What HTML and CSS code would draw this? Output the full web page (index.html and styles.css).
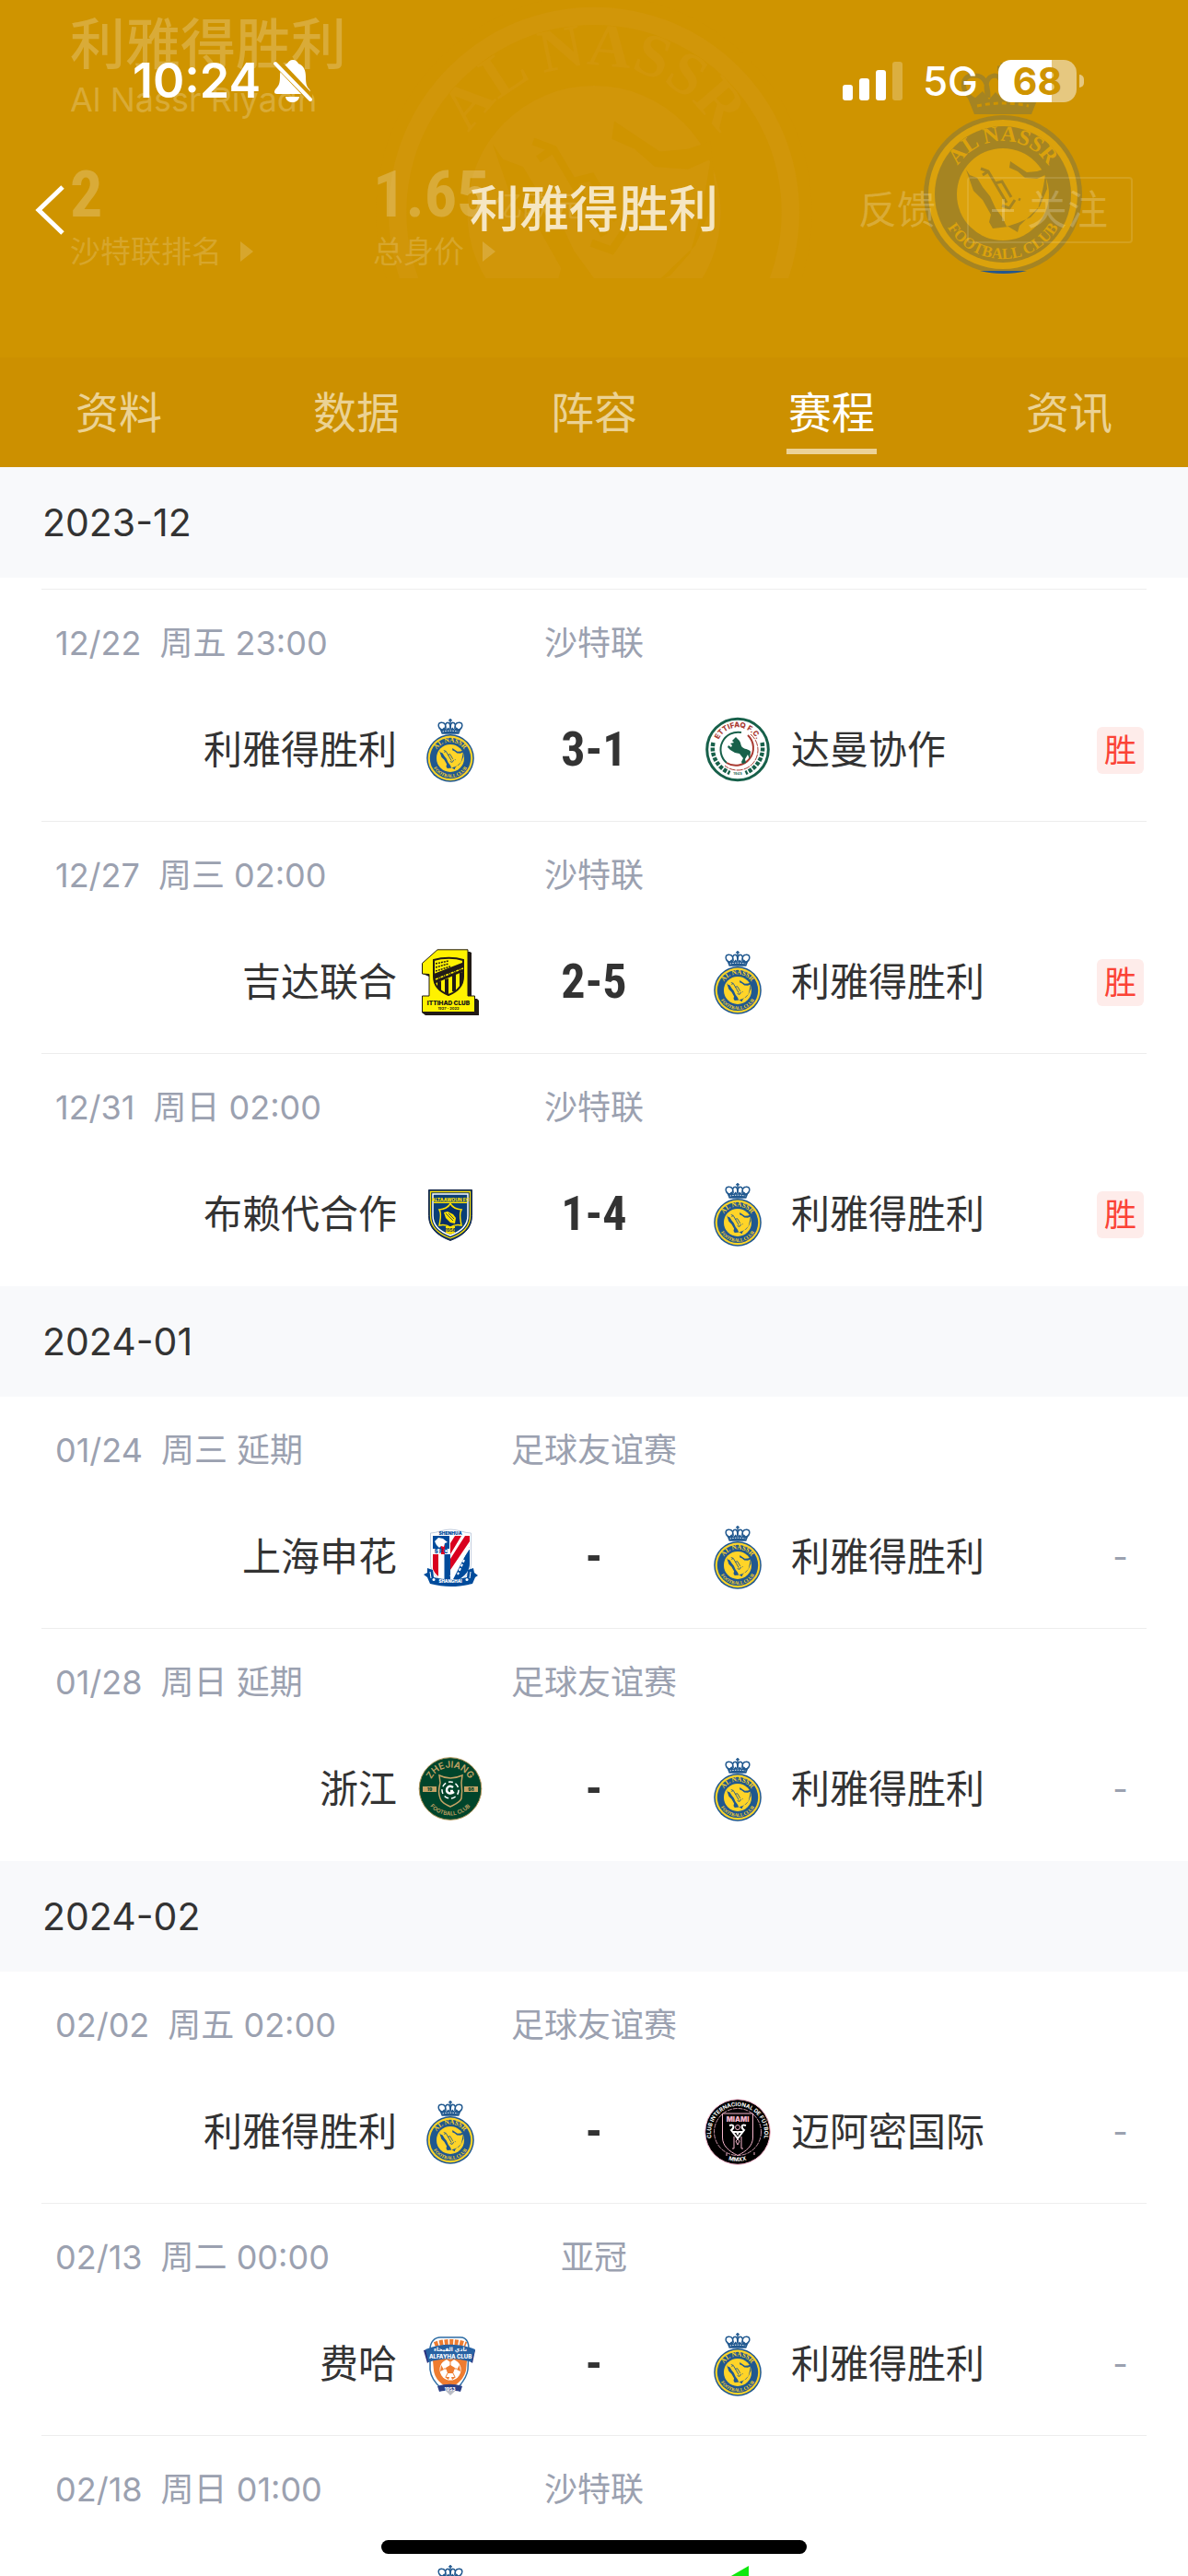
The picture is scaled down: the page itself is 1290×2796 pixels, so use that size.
FILE: index.html
```html
<!DOCTYPE html>
<html lang="zh-CN">
<head>
<meta charset="utf-8">
<meta name="viewport" content="width=device-width, initial-scale=1">
<title>利雅得胜利 - 赛程</title>
<link rel="stylesheet" href="styles.css">
</head>
<body>
<svg class="shapes" aria-hidden="true">
  <defs>
    <path id="nassr-top" d="M32 143a58 58 0 0 1 116 0"/>
    <path id="nassr-bottom" d="M20 143a70 70 0 0 0 140 0"/>
    <path id="ettifaq-top" d="M13.500 34a22.500 22.500 0 0 1 45 0"/>
    <path id="zj-top" d="M13 35.500a23 23 0 0 1 46 0"/>
    <path id="zj-bottom" d="M7 35.500a29 29 0 0 0 58 0"/>
    <path id="miami-ring" d="M15 57a29 29 0 1 1 42 0"/>
    <path id="miami-bottom" d="M4 36a32 32 0 0 0 64 0"/>
    <clipPath id="shenhua-clip"><path d="M16 13h41v30c0 10-8 17-20.500 21C24 60 16 53 16 43z"/></clipPath>
    <clipPath id="ittihad-clip"><path d="M18 12c10-3 23-3 32 0v18c0 10-6 16-16 20-10-4-16-10-16-20z"/></clipPath>
  </defs>
</svg>
<svg class="sprite" aria-hidden="true">
  <symbol id="nassr" viewBox="0 0 180 230">
    <g class="crest-line" fill="none" stroke-width="5">
      <path d="M60 41C43 33 43 12 60 14c9 0 14 8 14 24M120 41c17-8 17-29 0-27-9 0-14 8-14 24M74 38c-4-14-2-23 7-24 6 0 9 8 9 24M106 38c4-14 2-23-7-24-6 0-9 8-9 24"/>
      <path d="M90 0v38M84 6h12"/>
    </g>
    <path class="crest-dark" d="M49 31l10 8 9-8 7 9 7-8 8 8 8-8 7 8 7-9 9 8 10-8-10 25H59z"/>
    <path class="crest-gap" d="M62 47c18-4 38-4 56 0" fill="none" stroke-width="3" stroke-dasharray="5 4"/>
    <circle class="crest-dark" cx="90" cy="143" r="86"/>
    <circle class="crest-light" cx="90" cy="143" r="81"/>
    <circle class="crest-dark" cx="90" cy="143" r="74"/>
    <circle class="crest-light" cx="90" cy="143" r="50"/>
    <path class="crest-dark" d="M50 116l4 6 8 3 6 10 8 10 6 13 8 11 4 9 12-4 14-6 8-9 3-11 3-14 2-12-9 4-13-1-8-7-9-4 1-7 9 6 9 6 11-1 9-3 2 22-8 19-22 21-2 7-10-6-17 2-4-7 2-8-9-16-10-10z"/>
    <path class="crest-line" d="M66 115l8 3 20 34M74 118l-6 4M81 131l8-2 10 17M89 155l8 3 6-9M107 148l2 1" fill="none" stroke-width="3"/>
    <text class="crest-word" font-size="24"><textPath href="#nassr-top" startOffset="50%" text-anchor="middle">AL NASSR</textPath></text>
    <text class="crest-word" font-size="17"><textPath href="#nassr-bottom" startOffset="50%" text-anchor="middle">FOOTBALL CLUB</textPath></text>
  </symbol>

  <symbol id="ettifaq" viewBox="0 0 72 72">
    <circle cx="36" cy="35.500" r="33.300" fill="#fff" stroke="#17604a" stroke-width="3"/>
    <text fill="#a93a32" font-family="Inter" font-weight="800" font-size="8"><textPath href="#ettifaq-top" startOffset="50%" text-anchor="middle">ETTIFAQ F.C.</textPath></text>
    <g fill="none" stroke="#17604a" stroke-dasharray="4 1.500">
      <path stroke-width="4.500" d="M9.500 28c-3 13 4 27 18 33M62.500 28c3 13-4 27-18 33"/>
    </g>
    <path d="M24 50a19 19 0 0 1 16-33" fill="none" stroke="#17604a" stroke-width="2"/>
    <path d="M47 20a19 19 0 0 1-23 30" fill="none" stroke="#a93a32" stroke-width="2"/>
    <path d="M50 19a22 22 0 0 1-28 34" fill="none" stroke="#a93a32" stroke-width="1" stroke-dasharray="7 1"/>
    <path fill="#17604a" d="M30 26l4-4 3 3c3 3 2 6 4 8 4 3 8 2 9 5l-1 8-2-5-3 5 1 4-4 1-1-2 2-4-4-5-5-1-5-3-3-3 1-2 3 2 1-2-2-2 4-1z"/>
    <text x="36" y="63" text-anchor="middle" fill="#17604a" font-family="Inter" font-weight="600" font-size="4">1945</text>
  </symbol>

  <symbol id="ittihad" viewBox="0 0 72 72">
    <path fill="#211b16" d="M26 3h31l2 1v50h6l2 2v16H9l-4-3 1-17 7 1V30l-7-3z"/>
    <path fill="#fff200" stroke="#211b16" stroke-width="1" d="M22 .800h33v50.200h7.500v17.500H5.500V51H13V27.500l-7.500-.500V15.500z"/>
    <path fill="#fff200" stroke="#211b16" stroke-width="2" d="M18 12c10-3 23-3 32 0v18c0 10-6 16-16 20-10-4-16-10-16-20z"/>
    <g clip-path="url(#ittihad-clip)">
      <path fill="#211b16" d="M18 27l33-13v10L18 38zM22 36l4-1v11h-4zM30 33l4-1v18h-4zM38 29l4-1v18h-4zM46 26l4-1v15h-4z"/>
      <path fill="none" stroke="#fff200" stroke-width="1.500" stroke-dasharray="3 1 1 1" d="M20 33l30-12"/>
      <path fill="none" stroke="#211b16" stroke-width="1.500" stroke-dasharray="2 1" d="M20 16l14-3M20 20l14-4M20 24l16-5"/>
    </g>
    <text x="34" y="60.500" text-anchor="middle" fill="#211b16" font-family="Inter" font-weight="900" font-size="6.500">ITTIHAD CLUB</text>
    <text x="34" y="66" text-anchor="middle" fill="#211b16" font-family="Inter" font-weight="700" font-size="4">1927 - 2022</text>
  </symbol>

  <symbol id="taawoun" viewBox="0 0 72 72">
    <path fill="#072f66" stroke="#1a2b4a" stroke-width="1" d="M12.500 9.500h47v28c0 14-10 22-23.500 27-13.500-5-23.500-13-23.500-27z"/>
    <path fill="none" stroke="#ffe100" stroke-width="1.300" d="M14.500 11.500h43v26c0 13-9 20-21.500 24.500C23.500 57.500 14.500 50.500 14.500 37.500z"/>
    <path fill="#0a3f77" stroke="#fff" stroke-width="1.500" d="M17 14h38v23.500c0 11-8 17.500-19 21.500-11-4-19-10.500-19-21.500z"/>
    <path fill="#ffe100" d="M18 22.500h36v1.500H18zM31 49h10v7l-5 2-5-2z"/>
    <path fill="#072f66" stroke="#ffe100" stroke-width="1.500" d="M36 24.500c3 5 7 6 12 6.500-3 5-1 11 0 17-5-1-9 0-12 2-3-2-7-3-12-2 1-6 3-12 0-17 5-.500 9-1.500 12-6.500z"/>
    <path fill="#ffe100" d="M29 34l4-1 6 3 3 4-1 6-5-1-5-5z"/>
    <path fill="none" stroke="#072f66" stroke-width=".800" d="M31 35l8 8M34 35l6 6"/>
    <text x="36" y="21.500" text-anchor="middle" fill="#ffe100" font-family="Inter" font-weight="800" font-size="5">ALTAAWOUN FC</text>
    <text x="36" y="54.500" text-anchor="middle" fill="#072f66" font-family="Inter" font-weight="800" font-size="4.500">1956</text>
  </symbol>

  <symbol id="shenhua" viewBox="0 0 72 72">
    <path fill="#fff" stroke="#c3cede" stroke-width="1" d="M14.500 10c7 0 13-4 21.500-4s15 4 22.500 4v33c0 11-8 18-22 23-14-5-22-12-22-23z"/>
    <text x="36" y="11.500" text-anchor="middle" fill="#004b9b" font-family="Inter" font-weight="900" font-size="5">SHENHUA</text>
    <g clip-path="url(#shenhua-clip)">
      <path fill="#004b9b" d="M17 13h18v19H17zM29.500 33H36v31h-6.500zM57 25v32L36 66z"/>
      <path fill="#fff" d="M17 27h19v6H17z"/>
      <path fill="#d9001f" d="M26 23h4v10h-4zM17 33h6v24h-6zM36 33l12-20h-7L36 21zM36 50l21-31v-6h-5L36 38z"/>
      <path fill="none" stroke="#fff" stroke-width="1.500" d="M36 57l21-31"/>
      <path fill="#fff" d="M19 19l4-4 5 1 5 4-3 1-1 4-3-1-2 2-3-3z"/>
      <text x="26" y="31.500" text-anchor="middle" fill="#004b9b" font-family="Inter" font-weight="900" font-size="6">S F C</text>
      <path stroke="#fff" stroke-width="2" stroke-dasharray="3 2" d="M51 39L44 55"/>
    </g>
    <path fill="#004b9b" d="M11 48l6 2 1 8c12 3 24 3 36 0l1-8 6-2 1 5 4 3-3 2-3 7c-17 4-30 4-46 0l-3-7-4-3 4-2z"/>
    <path fill="none" stroke="#fff" stroke-width="1" d="M14 52l1 7M58 52l-1 7"/>
    <circle cx="18" cy="60.500" r="1.500" fill="#fff"/><circle cx="54" cy="60.500" r="1.500" fill="#fff"/>
    <text x="36" y="64" text-anchor="middle" fill="#fff" font-family="Inter" font-weight="900" font-size="4.500">SHANGHAI</text>
  </symbol>

  <symbol id="zhejiang" viewBox="0 0 72 72">
    <circle cx="36" cy="35.500" r="33.800" fill="#00452b" stroke="#b3955a" stroke-width="1"/>
    <text fill="#c3a265" font-family="Inter" font-weight="600" font-size="10"><textPath href="#zj-top" startOffset="50%" text-anchor="middle">ZHEJIANG</textPath></text>
    <text fill="#c3a265" font-family="Inter" font-weight="600" font-size="6"><textPath href="#zj-bottom" startOffset="50%" text-anchor="middle">FOOTBALL CLUB</textPath></text>
    <path fill="#c3a265" d="M6 33h15v6H6zM51 33h15v6H51z"/>
    <text x="13.500" y="37.800" text-anchor="middle" fill="#00452b" font-family="Inter" font-weight="800" font-size="5">19</text>
    <text x="58.500" y="37.800" text-anchor="middle" fill="#00452b" font-family="Inter" font-weight="800" font-size="5">98</text>
    <path fill="none" stroke="#c3a265" stroke-width="1.500" d="M24 21c8 4 16 4 25 0l-1 8c1 8 1 11 0 17-1 4-6 6-12 9-6-3-10-5-11-9-2-6-2-9 0-17z"/>
    <circle cx="36" cy="37" r="9" fill="none" stroke="#fff" stroke-width="1.500" stroke-dasharray="5 3"/>
    <path fill="none" stroke="#fff" stroke-width="2.500" d="M39 34c-4-3-7 0-7 3s4 5 8 2M36 38h3"/>
  </symbol>

  <symbol id="miami" viewBox="0 0 72 72">
    <circle cx="36" cy="36" r="35.300" fill="#000" stroke="#f5b5cb" stroke-width="1"/>
    <text fill="#fff" font-family="Inter" font-weight="700" font-size="6"><textPath href="#miami-ring" startOffset="50%" text-anchor="middle">CLUB INTERNACIONAL DE FÚTBOL</textPath></text>
    <text fill="#fff" font-family="Inter" font-weight="700" font-size="6"><textPath href="#miami-bottom" startOffset="50%" text-anchor="middle">MMXX</textPath></text>
    <circle cx="36" cy="36" r="25.500" fill="none" stroke="#f5b5cb" stroke-width=".800" stroke-dasharray="5 1"/>
    <path fill="#000" stroke="#f5b5cb" stroke-width="1" d="M19.500 16h33v26c0 9-7 15-16.500 19.500C26.500 57 19.500 51 19.500 42z"/>
    <text x="36" y="25" text-anchor="middle" fill="#f5b5cb" font-family="Inter" font-weight="900" font-size="7.500">MIAMI</text>
    <path fill="none" stroke="#fff" stroke-width="2" d="M27 29c6-2 5 3 2 5l7 9 7-9c-3-2-4-7 2-5M30 36h5l1 2 1-2h5"/>
    <circle cx="36" cy="31" r="2.500" fill="none" stroke="#f5b5cb"/>
    <path fill="none" stroke="#f5b5cb" stroke-width="1" d="M32 41v13h-2M40 41v13h2M34 46l2-2 2 2-2 4zM24 59v3M54 58v3"/>
  </symbol>

  <symbol id="fayha" viewBox="0 0 72 72">
    <path fill="#b9bcc4" d="M24 58l12 12 13-12z"/>
    <path fill="#fff" stroke="#2f6ea5" stroke-width="1.500" d="M14 20c0-8 5-13 11-13h22c6 0 9 5 9 13l-1 22c-1 9-7 15-11 20H26c-6-5-11-11-12-20z"/>
    <path fill="none" stroke="#ee7c30" stroke-width="6" stroke-dasharray="4 1.500" d="M19 15c10-4 24-4 34 0"/>
    <path fill="#ee7c30" d="M17 32c12-5 25-5 37 0l-1 11c-2 7-6 12-12 16H29c-6-4-10-9-11-16z"/>
    <circle cx="36" cy="42" r="11.500" fill="#fff"/>
    <path fill="#ee7c30" d="M36 37l5 3-2 6h-6l-2-6zM32 31h8l-4 3zM46 37l1 7-4-2zM26 37l3 5-4 2zM30 50l5 0-1 3zM42 50l-5 0 1 3z"/>
    <path fill="none" stroke="#ee7c30" stroke-width="1" d="M36 34v4M43 41l-3 0M29 41l3 0M33 46l-2 4M39 46l2 4"/>
    <path fill="#2b2f7c" d="M7 21l9-2v11l-5 5zM63 21l-9-2v11l6 5z"/>
    <path fill="#2862a3" d="M9 20c17-7 36-7 54 0l-4 14c-15-5-31-5-47 0z"/>
    <text x="36" y="22" text-anchor="middle" fill="#fff" font-family="DejaVu Sans" font-weight="700" font-size="6">نادي الفيحاء</text>
    <text x="36" y="29.500" text-anchor="middle" fill="#fff" font-family="Inter" font-weight="800" font-size="6">ALFAYHA CLUB</text>
    <path fill="#2b3f86" d="M22 60c9-3 18-3 27 0l-2 6c-8-2-15-2-23 0z"/>
    <text x="35.500" y="64.500" text-anchor="middle" fill="#fff" font-family="Inter" font-weight="800" font-size="5">1953</text>
  </symbol>

  <symbol id="fateh" viewBox="0 0 72 72">
    <path fill="#10e80e" d="M48 3v66L8 50V26z"/>
  </symbol>
</svg>

<header class="header">
  <div class="hero">
    <svg class="watermark" aria-hidden="true" viewBox="0 0 180 230"><use href="#nassr"/></svg>
    <section class="profile" aria-label="球队信息">
      <h2 class="profile-name">利雅得胜利</h2>
      <p class="profile-latin">Al Nassr Riyadh</p>
      <div class="stats">
        <div class="stat">
          <p class="stat-value">2</p>
          <p class="stat-label">沙特联排名<i class="arrow"></i></p>
        </div>
        <div class="stat">
          <p class="stat-value">1.65<span class="stat-unit">亿欧元</span></p>
          <p class="stat-label">总身价<i class="arrow"></i></p>
        </div>
      </div>
    </section>
    <svg class="hero-crest" aria-hidden="true" viewBox="0 0 180 230">
      <use href="#nassr"/>
      <path fill="#22568f" d="M65 226h51c-16 4-35 4-51 0z"/>
    </svg>
    <div class="bars">
      <div class="status">
        <span class="clock">10:24</span>
        <svg class="bell" viewBox="0 0 42 46" aria-hidden="true">
          <path fill="#fff" d="M21 0c3 0 5 2 6 4 6 2 8 8 8 14 0 8 1 11 4 14 2 3 1 5-2 5H4c-3 0-4-2-2-5 4-4 5-7 5-14C7 11 9 6 15 4c1-2 3-4 6-4zM13 40h15c-1 8-14 8-15 0z"/>
          <path stroke="#cf9400" stroke-width="9" d="M2 1l40 42"/>
          <path stroke="#fff" stroke-width="4" stroke-linecap="round" d="M2 4l38 39"/>
        </svg>
        <span class="status-right">
          <svg class="signal" viewBox="0 0 65 42" aria-hidden="true">
            <g fill="#fff"><rect y="25" width="11" height="17" rx="3"/><rect x="18" y="18" width="11" height="24" rx="3"/><rect x="36" y="9" width="11" height="33" rx="3"/><rect x="54" width="11" height="42" rx="3" opacity=".25"/></g>
          </svg>
          <span class="network">5G</span>
          <span class="battery">68</span>
        </span>
      </div>
      <div class="navbar">
        <button class="back" type="button" aria-label="返回">
          <svg viewBox="0 0 32 54" aria-hidden="true"><path d="M30 2L4 27l26 25" fill="none" stroke="#fff" stroke-width="5"/></svg>
        </button>
        <h1 class="title">利雅得胜利</h1>
        <div class="actions">
          <button class="feedback" type="button">反馈</button>
          <button class="follow" type="button"><i class="plus"></i>关注</button>
        </div>
      </div>
    </div>
  </div>
  <nav class="tabs">
    <a class="tab" href="#info">资料</a>
    <a class="tab" href="#data">数据</a>
    <a class="tab" href="#squad">阵容</a>
    <a class="tab tab-active" href="#schedule" aria-current="page">赛程</a>
    <a class="tab" href="#news">资讯</a>
  </nav>
</header>

<main class="schedule" id="schedule">
  <section>
    <h2 class="month">2023-12</h2>
    <div class="lead"></div>
    <article class="match">
      <div class="meta"><time class="when"><span>12/22</span><span>周五 23:00</span></time><span class="league">沙特联</span></div>
      <div class="teams">
        <span class="home">利雅得胜利</span><svg class="logo"><use href="#nassr"/></svg>
        <strong class="score">3-1</strong>
        <svg class="logo"><use href="#ettifaq"/></svg><span class="away">达曼协作</span><span class="win">胜</span>
      </div>
    </article>
    <article class="match">
      <div class="meta"><time class="when"><span>12/27</span><span>周三 02:00</span></time><span class="league">沙特联</span></div>
      <div class="teams">
        <span class="home">吉达联合</span><svg class="logo"><use href="#ittihad"/></svg>
        <strong class="score">2-5</strong>
        <svg class="logo"><use href="#nassr"/></svg><span class="away">利雅得胜利</span><span class="win">胜</span>
      </div>
    </article>
    <article class="match">
      <div class="meta"><time class="when"><span>12/31</span><span>周日 02:00</span></time><span class="league">沙特联</span></div>
      <div class="teams">
        <span class="home">布赖代合作</span><svg class="logo"><use href="#taawoun"/></svg>
        <strong class="score">1-4</strong>
        <svg class="logo"><use href="#nassr"/></svg><span class="away">利雅得胜利</span><span class="win">胜</span>
      </div>
    </article>
  </section>

  <section>
    <h2 class="month">2024-01</h2>
    <article class="match">
      <div class="meta"><time class="when"><span>01/24</span><span>周三 延期</span></time><span class="league">足球友谊赛</span></div>
      <div class="teams">
        <span class="home">上海申花</span><svg class="logo"><use href="#shenhua"/></svg>
        <strong class="score">-</strong>
        <svg class="logo"><use href="#nassr"/></svg><span class="away">利雅得胜利</span><span class="none">-</span>
      </div>
    </article>
    <article class="match">
      <div class="meta"><time class="when"><span>01/28</span><span>周日 延期</span></time><span class="league">足球友谊赛</span></div>
      <div class="teams">
        <span class="home">浙江</span><svg class="logo"><use href="#zhejiang"/></svg>
        <strong class="score">-</strong>
        <svg class="logo"><use href="#nassr"/></svg><span class="away">利雅得胜利</span><span class="none">-</span>
      </div>
    </article>
  </section>

  <section>
    <h2 class="month">2024-02</h2>
    <article class="match">
      <div class="meta"><time class="when"><span>02/02</span><span>周五 02:00</span></time><span class="league">足球友谊赛</span></div>
      <div class="teams">
        <span class="home">利雅得胜利</span><svg class="logo"><use href="#nassr"/></svg>
        <strong class="score">-</strong>
        <svg class="logo"><use href="#miami"/></svg><span class="away">迈阿密国际</span><span class="none">-</span>
      </div>
    </article>
    <article class="match">
      <div class="meta"><time class="when"><span>02/13</span><span>周二 00:00</span></time><span class="league">亚冠</span></div>
      <div class="teams">
        <span class="home">费哈</span><svg class="logo"><use href="#fayha"/></svg>
        <strong class="score">-</strong>
        <svg class="logo"><use href="#nassr"/></svg><span class="away">利雅得胜利</span><span class="none">-</span>
      </div>
    </article>
    <article class="match">
      <div class="meta"><time class="when"><span>02/18</span><span>周日 01:00</span></time><span class="league">沙特联</span></div>
      <div class="teams">
        <span class="home"></span><svg class="logo"><use href="#nassr"/></svg>
        <strong class="score"></strong>
        <svg class="logo"><use href="#fateh"/></svg><span class="away"></span>
      </div>
    </article>
  </section>
</main>
<div class="home-indicator"></div>
</body>
</html>
```
FILE: styles.css
```css
:root {
  --gold: #cf9400;
  --ink: #333;
  --muted: #9ba1b0;
  --ghost: rgba(255, 255, 255, .22);
  --narrow: "Liberation Sans Narrow", "Roboto Condensed", Roboto, sans-serif;
  --crest-dark: #20588f;
  --crest-light: #ffd428;
  --crest-gap: #fff;
}

* { box-sizing: border-box; margin: 0; }

body {
  display: flex;
  flex-direction: column;
  height: 100vh;
  overflow: hidden;
  background: #fff;
  color: var(--ink);
  font-family: Inter, "Noto Sans CJK SC", sans-serif;
}

button {
  padding: 0;
  border: 0;
  background: none;
  color: inherit;
  font: inherit;
}

.shapes { position: absolute; width: 0; height: 0; }
.sprite { display: none; }

.crest-dark { fill: var(--crest-dark); }
.crest-light { fill: var(--crest-light); }
.crest-line { stroke: var(--crest-dark); }
.crest-gap { stroke: var(--crest-gap); }
.crest-word { fill: var(--crest-light); font-family: "Liberation Serif", serif; font-weight: 700; }

/* Header */
.header { flex: none; background: var(--gold); color: #fff; }

.hero { position: relative; display: grid; height: 388px; overflow: hidden; }
.profile, .bars { position: relative; grid-area: 1 / 1; }

.watermark {
  --crest-dark: #cf9400;
  --crest-light: #d19609;
  --crest-gap: #cf9400;
  position: absolute;
  left: 50%;
  top: -163px;
  width: 496px;
  height: 633px;
  margin-left: -248px;
  clip-path: inset(0 0 168px);
}

.hero-crest {
  --crest-dark: #a58422;
  --crest-light: #dba20c;
  --crest-gap: #cf9400;
  position: absolute;
  right: 111px;
  top: 68px;
  width: 180px;
  height: 230px;
}

.profile { padding: 18px 0 0 76px; color: var(--ghost); }
.profile-name { font-size: 60px; line-height: 60px; font-weight: 500; }
.profile-latin { margin-top: 8px; font-size: 36px; line-height: 44px; }
.stats { display: grid; grid-template-columns: 329px 329px; margin-top: 51px; }
.stat-value { font: 700 70px/60px var(--narrow); }
.stat-unit { margin-left: 4px; font: 400 32px/32px "Noto Sans CJK SC", sans-serif; opacity: .6; }
.stat-label { display: flex; align-items: center; margin-top: 14px; font-size: 33px; line-height: 36px; opacity: .8; }
.arrow { margin-left: 20px; border: solid transparent; border-width: 11px 0 11px 14px; border-left-color: currentColor; }

.status { display: flex; align-items: center; height: 176px; padding: 0 113px 0 144px; }
.clock { font-size: 52px; line-height: 60px; font-weight: 600; }
.bell { width: 42px; height: 46px; margin-left: 14px; }
.status-right { display: flex; align-items: center; gap: 22px; margin-left: auto; }
.signal { width: 65px; height: 42px; }
.network { font-size: 44px; line-height: 48px; font-weight: 500; }
.battery {
  position: relative;
  width: 85px;
  height: 46px;
  margin-right: 8px;
  border-radius: 14px;
  background: linear-gradient(90deg, #fff 58px, #e6c880 58px);
  color: var(--gold);
  font-size: 41px;
  line-height: 46px;
  font-weight: 700;
  text-align: center;
}
.battery::after {
  content: "";
  position: absolute;
  left: 88px;
  top: 16px;
  width: 5px;
  height: 14px;
  border-radius: 0 5px 5px 0;
  background: #e6c880;
}

.navbar {
  display: grid;
  grid-template-columns: 1fr auto 1fr;
  align-items: center;
  height: 104px;
  padding: 0 60px 0 38px;
}
.back { justify-self: start; width: 32px; height: 54px; }
.back svg { display: block; width: 32px; height: 54px; }
.title { margin-right: -22px; color: #f5e6c3; font-size: 54px; line-height: 60px; font-weight: 500; }
.actions { display: flex; justify-content: flex-end; align-items: center; gap: 34px; color: var(--ghost); }
.feedback { font-size: 42px; line-height: 48px; }
.follow {
  display: flex;
  align-items: center;
  justify-content: center;
  gap: 14px;
  width: 180px;
  height: 72px;
  border: 2px solid rgba(255, 255, 255, .12);
  border-radius: 4px;
  font-size: 44px;
  line-height: 48px;
}
.plus {
  width: 24px;
  height: 24px;
  background:
    linear-gradient(currentColor, currentColor) center / 24px 3px no-repeat,
    linear-gradient(currentColor, currentColor) center / 3px 24px no-repeat;
}

.tabs { display: grid; grid-template-columns: repeat(5, 1fr); height: 119px; background: #cc9000; }
.tab {
  display: flex;
  flex-direction: column;
  align-items: center;
  padding-top: 30px;
  color: #ebd294;
  font-size: 47px;
  line-height: 60px;
  text-decoration: none;
}
.tab-active { color: #fff; }
.tab-active::after { content: ""; width: 98px; height: 6px; margin-top: 9px; background: #ecd296; }

/* Schedule */
.schedule { flex: 1; min-height: 0; overflow: hidden; }

.month {
  padding: 1px 46px 0;
  background: #f8f9fb;
  font-size: 41px;
  line-height: 119px;
  font-weight: 400;
}
.lead { height: 13px; margin: 0 45px; border-bottom: 1px solid #ededed; }

.match { margin: 0 45px; padding: 37px 0 41px; border-bottom: 1px solid #ededed; }
.match:last-child { border-bottom-color: transparent; }

.meta {
  display: grid;
  grid-template-columns: 1fr auto 1fr;
  padding: 0 15px;
  color: var(--muted);
  font-size: 36px;
  line-height: 42px;
}
.when { display: flex; gap: 20px; }

.teams {
  display: grid;
  grid-template-columns: minmax(0, 1fr) 72px 240px 72px minmax(0, 1fr);
  align-items: center;
  height: 72px;
  margin-top: 59px;
  font-size: 42px;
  line-height: 60px;
}
.home { padding-right: 22px; text-align: right; }
.away { grid-area: 1 / 5; padding-left: 22px; }
.logo { display: block; width: 72px; height: 72px; }
.logo:has([href="#nassr"]) { height: 69px; }
.score { font: 700 52px/60px var(--narrow); text-align: center; }
.win, .none { grid-area: 1 / 5; justify-self: end; text-align: center; }
.win {
  width: 51px;
  height: 51px;
  margin-right: 3px;
  border-radius: 6px;
  background: #feecea;
  color: #fb4336;
  font-size: 35px;
  line-height: 51px;
}
.none { width: 57px; color: var(--muted); font-size: 36px; }

.home-indicator {
  position: fixed;
  left: 50%;
  bottom: 24px;
  width: 462px;
  height: 15px;
  margin-left: -231px;
  border-radius: 8px;
  background: #000;
}
```
